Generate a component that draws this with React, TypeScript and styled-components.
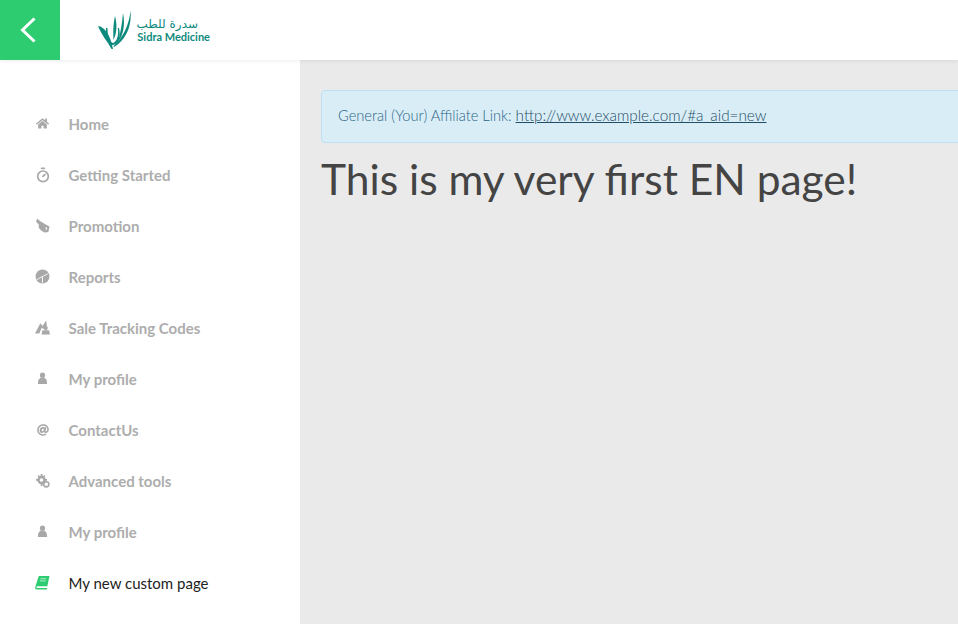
import React from 'react';
import styled, { createGlobalStyle } from 'styled-components';
import { FaAt, FaHome } from 'react-icons/fa';
import { Timer } from 'lucide-react';

const GlobalStyle = createGlobalStyle`
  html, body {
    margin: 0;
    height: 100%;
    overflow: hidden;
    font-family: "Lato", "Liberation Sans", sans-serif;
  }
`;

const Page = styled.div`
  display: flex;
  flex-direction: column;
  height: 624px;
  width: 958px;
  overflow: hidden;
  background: #eaeaea;
`;

const Header = styled.header`
  display: flex;
  align-items: center;
  flex: none;
  height: 60px;
  background: #fff;
  box-shadow: 0 1px 4px rgba(0, 0, 0, 0.08);
  position: relative;
  z-index: 1;
`;

const BackButton = styled.button`
  display: flex;
  align-items: center;
  justify-content: center;
  width: 60px;
  height: 60px;
  border: 0;
  padding: 0 4px 0 0;
  background: #2ecc71;
`;

const Logo = styled.div`
  display: flex;
  align-items: flex-start;
  gap: 5px;
  margin-left: 38px;
  color: #0e8a7d;
`;

const LogoText = styled.div`
  display: flex;
  flex-direction: column;
  align-items: flex-end;
  width: 74px;
  padding-top: 6px;
  font-size: 11px;
  font-weight: 700;
  line-height: 11px;
  white-space: nowrap;
`;

const LogoArabic = styled.span`
  margin-right: 12px;
  font-family: "DejaVu Sans", sans-serif;
  font-size: 12px;
  font-weight: 400;
  line-height: 14px;
`;

const Body = styled.div`
  display: flex;
  flex: 1;
  min-height: 0;
`;

const Sidebar = styled.nav`
  display: flex;
  flex-direction: column;
  flex: none;
  width: 300px;
  padding-top: 39px;
  background: #fff;
  box-sizing: border-box;
`;

const NavItem = styled.a<{ $active?: boolean }>`
  display: flex;
  align-items: center;
  height: 51px;
  padding: 0 0 2px 36px;
  box-sizing: border-box;
  font-size: 15px;
  font-weight: ${(p) => (p.$active ? 400 : 700)};
  color: ${(p) => (p.$active ? '#222' : '#adadad')};
`;

const NavIcon = styled.span<{ $active?: boolean }>`
  display: flex;
  align-items: center;
  justify-content: center;
  width: 13px;
  height: 13px;
  margin-right: 19.5px;
  font-size: 13px;
  color: ${(p) => (p.$active ? '#2ecc71' : '#a8a8a8')};

  svg {
    flex: none;
  }
`;

const Main = styled.main`
  flex: 1;
  min-width: 0;
  padding: 30px 0 0 21px;
`;

const Alert = styled.div`
  box-sizing: border-box;
  width: 700px;
  height: 53px;
  padding: 15px 16px 0;
  display: flex;
  align-items: baseline;
  gap: 4px;
  background: #d9edf7;
  border: 1px solid #bce0f3;
  border-radius: 4px;
  color: #2a6585;
  font-size: 14.65px;
  font-weight: 300;
  white-space: nowrap;
`;

const AlertLink = styled.a`
  color: #1f4e66;
  font-size: 15.3px;
  text-decoration: underline;
`;

const Title = styled.h1`
  margin: 12px 0 0;
  font-size: 42.5px;
  font-weight: 400;
  line-height: 48px;
  color: #444;
  white-space: nowrap;
`;

const Glyph = ({ children, size = 15 }: { children: React.ReactNode; size?: number }) => (
  <svg width={size} height={size} viewBox="0 0 14 14" fill="currentColor">
    {children}
  </svg>
);

const PromoIcon = () => (
  <Glyph>
    <path d="M2 0.5 L5 3 L10 6 L13.5 8 L12.5 13 L9 13.5 L6 12 L3.5 9 L3.5 6 L1 3.5 Z" />
    <path d="M10 8.5 L11.2 9 L11 11 L10 11 Z" fill="#fff" />
  </Glyph>
);

const PieIcon = () => (
  <Glyph>
    <circle cx="7" cy="7" r="6.5" />
    <path d="M7 7 L7 13 M7 7 L1.5 10 M7 7 L12 4.5" stroke="#fff" strokeWidth="0.8" fill="none" />
  </Glyph>
);

const TrackingIcon = () => (
  <Glyph>
    <path d="M0 12.5 L5 3 L7 5.5 L4 12.5 Z" />
    <path d="M6 7 L10.5 0.5 L11 5.5 L8 8.5 Z" />
    <circle cx="10" cy="7.5" r="2" />
    <path d="M6 13.5 L7 9.5 L13 9.5 L14 13.5 Z" />
  </Glyph>
);

const UserIcon = () => (
  <Glyph size={13}>
    <circle cx="7" cy="3.4" r="2.8" />
    <path d="M5 6 L9 6 L11.5 8.5 L12 12.8 L2 12.8 L2.5 8.5 Z" />
  </Glyph>
);

const GearsIcon = () => (
  <Glyph size={14}>
    <circle cx="5.5" cy="6" r="3" fill="none" stroke="currentColor" strokeWidth="2.4" />
    <path d="M4.7 0 h1.8 v2.5 h-1.8 Z M0 5 h2.5 v1.8 h-2.5 Z M8.5 5 h2.5 v1.8 h-2.5 Z M4.7 9.5 h1.8 v2.5 h-1.8 Z M1.5 2 l1.2 -1 l1.4 1.6 l-1.2 1 Z M9.5 2 l-1.2 -1 l-1.4 1.6 l1.2 1 Z" />
    <circle cx="10.3" cy="10.3" r="2.6" fill="#fff" stroke="currentColor" strokeWidth="1.6" />
  </Glyph>
);

const BookIcon = () => (
  <Glyph>
    <path d="M3.5 1 L13.5 1 L11.5 10.5 L2 10.5 C1.2 10.5 1.2 12.2 2 12.2 L11.3 12.2 L11 13.5 L1.5 13.5 C0.3 13.5 0 12.3 0.3 11 Z" />
    <path d="M5 3.5 L10.5 3.5 M4.5 5.5 L10 5.5" stroke="#fff" strokeWidth="0.6" />
  </Glyph>
);

const items = [
  { label: 'Home', icon: <FaHome /> },
  { label: 'Getting Started', icon: <Timer size={16} strokeWidth={2.6} /> },
  { label: 'Promotion', icon: <PromoIcon /> },
  { label: 'Reports', icon: <PieIcon /> },
  { label: 'Sale Tracking Codes', icon: <TrackingIcon /> },
  { label: 'My profile', icon: <UserIcon /> },
  { label: 'ContactUs', icon: <FaAt size={12} /> },
  { label: 'Advanced tools', icon: <GearsIcon /> },
  { label: 'My profile', icon: <UserIcon /> },
  { label: 'My new custom page', icon: <BookIcon />, active: true },
];

const SidraMark = () => (
  <svg width="33" height="38" viewBox="0 0 33 38" fill="currentColor">
    <path d="M0 15 C6 16 12 22 15 38 L13.5 38 C10 31 4 25 0 15 Z" />
    <path d="M8 17 C7 27 10 34 15 34 C21 33 23 26 21 17 L19.8 17 C21 25 18.5 31 15 32 C11.5 31 9.5 26 9.5 17 Z" />
    <path d="M17 5 C19.5 14 18.5 23 15.5 29 C15 22 15 14 17 5 Z" />
    <path d="M25 2 C27.5 14 25 25 20 31 C22.5 22 24 13 25 2 Z" />
    <path d="M32.5 0 C34 15 28 29 16 36 L15.5 35 C25 27 31 14 32.5 0 Z" />
  </svg>
);

export default function App() {
  return (
    <Page>
      <GlobalStyle />
      <Header>
        <BackButton>
          <svg width="16" height="26" viewBox="0 0 16 26" fill="none" stroke="#fff" strokeWidth="3">
            <path d="M14.5 1.5 L2.5 13 L14.5 24.5" />
          </svg>
        </BackButton>
        <Logo>
          <SidraMark />
          <LogoText>
            <LogoArabic lang="ar" dir="rtl">سدرة للطب</LogoArabic>
            <span>Sidra Medicine</span>
          </LogoText>
        </Logo>
      </Header>
      <Body>
        <Sidebar>
          {items.map((item, i) => (
            <NavItem key={i} $active={item.active}>
              <NavIcon $active={item.active}>{item.icon}</NavIcon>
              {item.label}
            </NavItem>
          ))}
        </Sidebar>
        <Main>
          <Alert>
            General (Your) Affiliate Link: <AlertLink>http://www.example.com/#a_aid=new</AlertLink>
          </Alert>
          <Title>This is my very first EN page!</Title>
        </Main>
      </Body>
    </Page>
  );
}
